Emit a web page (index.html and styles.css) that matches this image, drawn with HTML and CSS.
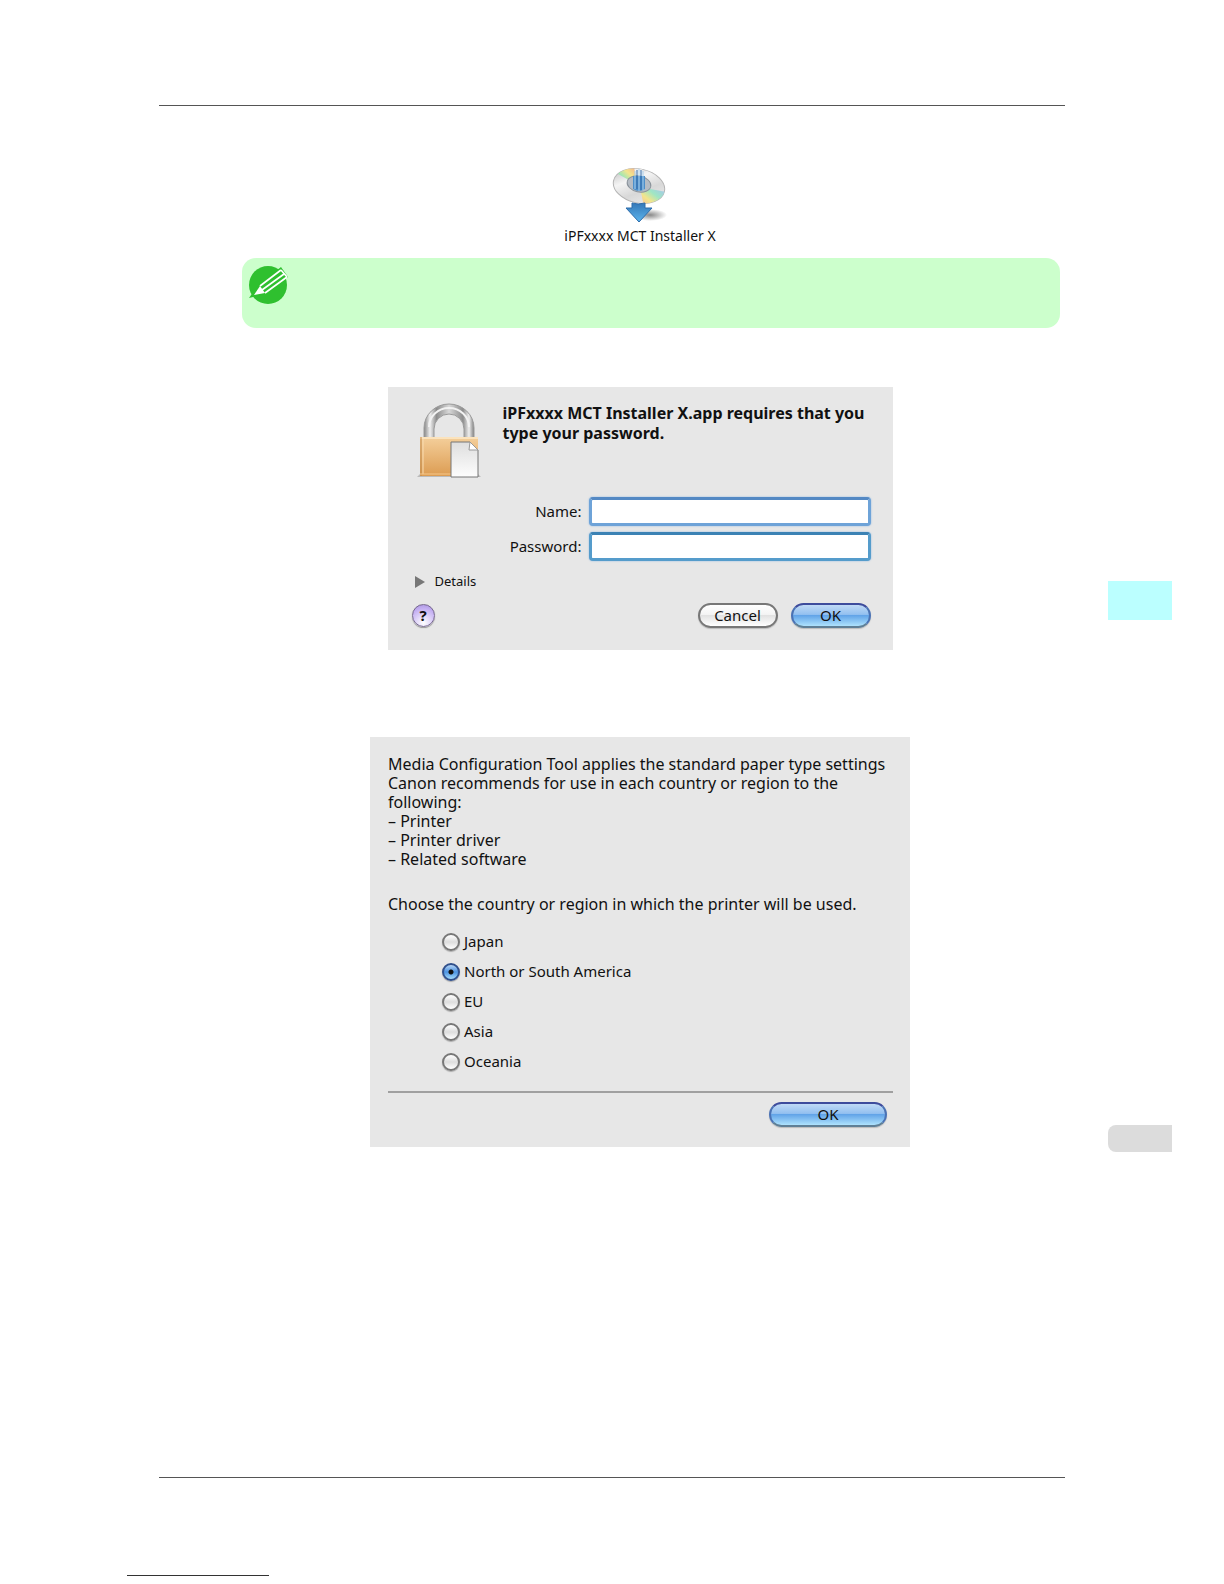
FILE: index.html
```html
<!DOCTYPE html>
<html lang="en">

<head>
    <meta charset="UTF-8">
    <meta name="viewport" content="width=device-width, initial-scale=1.0">
    <title>iPFxxxx MCT Installer X</title>
    <link rel="stylesheet" href="styles.css">
</head>

<body>
    <div class="page">
        <main class="content">
            <figure class="installer">
                <svg class="installer-icon" width="56" height="56" viewBox="0 0 56 56" aria-hidden="true">
                    <defs>
                        <linearGradient id="disc" x1="0" y1="0" x2="1" y2="1">
                            <stop offset="0" stop-color="#b4b4b4" />
                            <stop offset=".35" stop-color="#f4f4f4" />
                            <stop offset=".6" stop-color="#d8d8d8" />
                            <stop offset="1" stop-color="#f2f2f2" />
                        </linearGradient>
                        <linearGradient id="rainbow-top" x1="0" y1="1" x2="1" y2="0">
                            <stop offset="0" stop-color="#c5cff5" />
                            <stop offset=".35" stop-color="#9fe6b4" />
                            <stop offset=".6" stop-color="#f3e58c" />
                            <stop offset="1" stop-color="#f4a58c" />
                        </linearGradient>
                        <linearGradient id="rainbow-bottom" x1="0" y1="1" x2="1" y2="0">
                            <stop offset="0" stop-color="#f4b49c" />
                            <stop offset=".35" stop-color="#f3e58c" />
                            <stop offset=".6" stop-color="#9fe6c4" />
                            <stop offset="1" stop-color="#a8bdf5" />
                        </linearGradient>
                        <linearGradient id="arrow" x1="0" y1="0" x2="0" y2="1">
                            <stop offset="0" stop-color="#3478b8" />
                            <stop offset="1" stop-color="#5cb4ec" />
                        </linearGradient>
                        <radialGradient id="shade">
                            <stop offset="0" stop-color="#888" />
                            <stop offset="1" stop-color="#888" stop-opacity="0" />
                        </radialGradient>
                        <clipPath id="disc-clip">
                            <ellipse cx="27" cy="19" rx="26" ry="17" transform="rotate(12 27 19)" />
                        </clipPath>
                    </defs>
                    <ellipse cx="38" cy="48" rx="17" ry="6" fill="url(#shade)" />
                    <ellipse cx="27" cy="19" rx="26" ry="17" transform="rotate(12 27 19)" fill="url(#disc)" stroke="#b4b4b4" />
                    <g clip-path="url(#disc-clip)">
                        <path d="M26 18 6 7 12 0 22 0Z" fill="url(#rainbow-top)" />
                        <path d="M28 20 32 40 46 38 54 25Z" fill="url(#rainbow-bottom)" />
                        <path d="M26 18 22 0 31 0Z" fill="#fff" opacity=".6" />
                    </g>
                    <ellipse cx="27" cy="17" rx="12" ry="8" transform="rotate(12 27 17)" fill="#b5bcc4" stroke="#8b939b" />
                    <path d="M21 9h12v13q-6 4-12 0z" fill="#4c8fca" />
                    <path d="M23 4v18M27 2v22M31 4v19" stroke="#a9d0ee" stroke-width="1" />
                    <path d="M25 3v19M29 3v20" stroke="#2f68a8" stroke-width="1" />
                    <path d="M20 36q6 2 13 0v5h7L27 55 14 41h6z" fill="url(#arrow)" stroke="#2d6cab" />
                </svg>
                <figcaption>iPFxxxx MCT Installer X</figcaption>
            </figure>

            <div class="note">
                <svg width="40" height="40" viewBox="0 0 40 40" aria-hidden="true">
                    <circle cx="20" cy="20" r="19" fill="#2fc02f" />
                    <path d="M1 33 10 20 33 2 40 12 17 29Z" fill="#2fc02f" />
                    <path d="M6 30 12 21 17 28Z" fill="#fff" />
                    <path d="M12 21 33 5M14 25 36 9M17 28 39 12M33 5 39 12" fill="none" stroke="#fff" stroke-width="1.7" />
                </svg>
            </div>

            <!-- password dialog -->
            <form class="dialog login">
                <div class="login-head">
                    <svg class="lock" width="64" height="76" viewBox="0 0 64 76" aria-hidden="true">
                        <defs>
                            <linearGradient id="steel" x1="0" y1="0" x2="1" y2="0">
                                <stop offset="0" stop-color="#858585" />
                                <stop offset=".12" stop-color="#efefef" />
                                <stop offset=".25" stop-color="#8d8d8d" />
                                <stop offset=".5" stop-color="#d8d8d8" />
                                <stop offset=".78" stop-color="#8d8d8d" />
                                <stop offset=".9" stop-color="#efefef" />
                                <stop offset="1" stop-color="#808080" />
                            </linearGradient>
                            <linearGradient id="brass" x1="0" y1="0" x2="0" y2="1">
                                <stop offset="0" stop-color="#f4cf9b" />
                                <stop offset="1" stop-color="#dc9c52" />
                            </linearGradient>
                            <linearGradient id="sheet" x1="0" y1="0" x2="0" y2="1">
                                <stop offset="0" stop-color="#dedede" />
                                <stop offset="1" stop-color="#fdfdfd" />
                            </linearGradient>
                        </defs>
                        <path d="M0 74 4 70H60L64 74Z" fill="#bbb" />
                        <path d="M7 36V25a25 24 0 0 1 50 0V36H47V26a15 15 0 0 0-30 0V36Z" fill="url(#steel)" stroke="#9a9a9a" />
                        <path d="M12 24a20 19 0 0 1 40 0" fill="none" stroke="#f2f2f2" stroke-width="2" />
                        <rect x="3" y="34" width="58" height="39" fill="url(#brass)" />
                        <path d="M3 35H61" stroke="#fbe3bd" stroke-width="2" />
                        <path d="M4 34V73" stroke="#c08a4d" />
                        <path d="M6 36V71" stroke="#f9dcb1" />
                        <path d="M3 71H61" stroke="#f6c78b" />
                        <path d="M34 39H53L61 47V74H34Z" fill="url(#sheet)" stroke="#777" />
                        <path d="M53 39 52 47H61Z" fill="#fff" stroke="#999" />
                    </svg>
                    <p class="login-title">iPFxxxx MCT Installer X.app requires that you type your password.</p>
                </div>
                <div class="fields">
                    <label for="name">Name:</label>
                    <input type="text" id="name">
                    <label for="password">Password:</label>
                    <input type="password" id="password" class="active">
                </div>
                <button type="button" class="details">
                    <svg width="10" height="12" viewBox="0 0 10 12" aria-hidden="true">
                        <path d="M0 0 10 6 0 12Z" fill="#777" />
                    </svg>
                    Details
                </button>
                <div class="login-buttons">
                    <button type="button" class="help">?</button>
                    <button type="button" class="btn">Cancel</button>
                    <button type="button" class="btn primary">OK</button>
                </div>
            </form>

            <!-- region dialog -->
            <form class="dialog region">
                <p>Media Configuration Tool applies the standard paper type settings Canon recommends for use in each country or region to the following:</p>
                <ul>
                    <li>– Printer</li>
                    <li>– Printer driver</li>
                    <li>– Related software</li>
                </ul>
                <fieldset>
                    <legend>Choose the country or region in which the printer will be used.</legend>
                    <label><input type="radio" name="region"> Japan</label>
                    <label><input type="radio" name="region" checked> North or South America</label>
                    <label><input type="radio" name="region"> EU</label>
                    <label><input type="radio" name="region"> Asia</label>
                    <label><input type="radio" name="region"> Oceania</label>
                </fieldset>
                <div class="region-buttons">
                    <button type="button" class="btn primary wide">OK</button>
                </div>
            </form>
        </main>

        <aside class="tabs">
            <div class="tab-chapter"></div>
            <div class="tab-page"></div>
        </aside>
    </div>
    <footer class="footer"></footer>
</body>

</html>
```
FILE: styles.css
```css
* {
    margin: 0;
    padding: 0;
    box-sizing: border-box;
}

body {
    background: #fff;
    color: #111;
    font-family: "Noto Sans", "Open Sans", sans-serif;
    font-size: 15px;
    line-height: 19px;
}

ul {
    list-style: none;
}

button,
input {
    font: inherit;
    color: inherit;
}

.page {
    display: grid;
    grid-template-columns: 1fr 64px;
    column-gap: 43px;
    padding: 105px 52px 0 159px;
}

.content {
    display: flex;
    flex-direction: column;
    align-items: center;
    padding: 61px 5px 330px 61px;
    border-top: 1px solid #555;
    border-bottom: 1px solid #555;
}

.installer {
    display: flex;
    flex-direction: column;
    align-items: center;
    gap: 3px;
    font-size: 14px;
}

/* green hint bar */
.note {
    align-self: stretch;
    height: 70px;
    margin: 13px 0 59px 22px;
    padding: 7px 6px;
    border-radius: 14px;
    background: #cfc;
}

.dialog {
    background: #e7e7e7;
}

.login {
    width: 505px;
    padding: 16px 22px 22px 24px;
    margin-bottom: 87px;
}

.login-head {
    display: flex;
    gap: 22px;
    padding-left: 5px;
}

.login-title {
    flex: 1;
    font-size: 16px;
    font-weight: bold;
    line-height: 20px;
}

.fields {
    display: grid;
    grid-template-columns: 1fr 282px;
    gap: 6px 7px;
    align-items: center;
    margin-top: 18px;
}

.fields label {
    text-align: right;
}

.fields input {
    width: 100%;
    height: 29px;
    padding: 0 6px;
    border: 3px solid #6ea3d8;
    border-top-color: #5489c4;
    border-radius: 4px;
    background: #fff;
    outline: none;
    box-shadow: 0 0 2px #8fb8e2;
}

.fields .active {
    border-color: #559ccb;
    border-top-color: #3b82b4;
}

.details {
    display: flex;
    align-items: center;
    gap: 10px;
    margin: 11px 0 0 3px;
    border: none;
    background: none;
    font-size: 13px;
}

.login-buttons {
    display: flex;
    align-items: center;
    gap: 13px;
    margin-top: 12px;
}

.help {
    width: 23px;
    height: 23px;
    margin-right: auto;
    border: 1px solid #77698f;
    border-radius: 50%;
    background: radial-gradient(circle at 50% 85%, #fff, #c3aef2 70%, #a58fd9);
    box-shadow: 0 1px 1px #999;
    font-weight: bold;
}

.btn {
    width: 80px;
    height: 25px;
    border: 2px solid #777;
    border-radius: 13px;
    background: linear-gradient(#fff, #f4f4f4 45%, #e2e2e2 50%, #fff);
    box-shadow: 0 1px 1px #bbb;
    line-height: 19px;
}

.primary {
    border-color: #3e4c9c #4a72b4 #5f7f96;
    background: linear-gradient(#c0daf6, #93c0f0 45%, #62a4e8 50%, #aee2fd);
}

.wide {
    width: 118px;
}

.region {
    width: 540px;
    padding: 18px 17px 20px 18px;
    font-size: 16px;
}

.region fieldset {
    display: flex;
    flex-direction: column;
    gap: 11px;
    margin-top: 26px;
    padding: 0 0 20px 54px;
    border: none;
    border-bottom: 2px solid #a0a0a0;
}

.region legend {
    margin: 0 0 18px -54px;
}

.region label {
    display: flex;
    align-items: center;
    gap: 4px;
    font-size: 15px;
}

.region input {
    appearance: none;
    width: 18px;
    height: 18px;
    border: 2px solid #777;
    border-radius: 50%;
    background: linear-gradient(#fff, #ddd 50%, #fff);
    box-shadow: 0 1px 1px #aaa;
}

.region input:checked {
    border-color: #31508c;
    background: radial-gradient(circle, #111 0 2px, transparent 3px), linear-gradient(#b5d4f5, #4c93e2 50%, #a5dcfc);
}

.region-buttons {
    display: flex;
    justify-content: flex-end;
    padding: 9px 6px 0 0;
    font-size: 15px;
}

/* tabs on the page edge */
.tabs {
    padding-top: 476px;
}

.tab-chapter {
    height: 39px;
    background: #bff;
}

.tab-page {
    height: 27px;
    margin-top: 505px;
    border-radius: 8px 0 0 8px;
    background: #dcdcdc;
}

.footer {
    width: 142px;
    margin: 97px 0 0 127px;
    border-top: 1px solid #333;
}
```
